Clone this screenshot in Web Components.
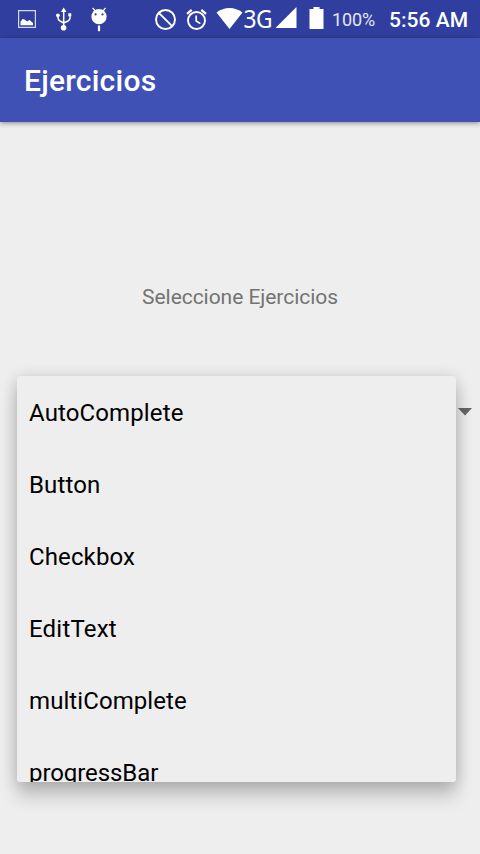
<!DOCTYPE html>
<html lang="es">
<head>
<meta charset="utf-8">
<title>Ejercicios</title>
<style>
html,body{margin:0;height:100%;background:#eee;overflow:hidden}
body{font-family:Roboto,"Liberation Sans",sans-serif}
</style>
</head>
<body>
<exercise-app></exercise-app>
<script>
const define = (name, html) => customElements.define(name, class extends HTMLElement {
  constructor() {
    super();
    this.attachShadow({ mode: 'open' }).innerHTML = html;
  }
});

define('status-bar', `
<style>
:host{display:flex;align-items:flex-start;height:38px;background:#303f9f;color:#fff;box-sizing:border-box;white-space:nowrap}
svg{display:block;flex:none;height:38px;fill:#fff}
span{flex:none;line-height:38px;height:38px}
.net{font:25px/37px "Noto Sans","Open Sans",sans-serif;width:30px;letter-spacing:-.5px;transform:translateX(-.6px) scaleX(.91);transform-origin:0 0}
.pct{font-size:18px;line-height:40px;width:57px;margin-left:-.6px;color:#e4e6f4;letter-spacing:-.1px}
.time{font-size:21px;font-weight:500;line-height:40px;letter-spacing:.04px}
</style>
<svg width="153" viewBox="0 0 153 38">
  <path d="M18.6 10.6h16.8v16.8H18.6z" fill="none" stroke="#d6d9ec" stroke-width="1.2"/>
  <path d="M20.5 25.2v-3.5l2-2.6 1.6.2 3 2.2 2.4-1.6 3.5 3v2.3z"/>
  <path d="M63.7 28V11M58 15.500V18q0 2 2 3l3.700 2M70 16v2q0 2-2 3l-4.300 2" fill="none" stroke="#fff" stroke-width="1.500"/>
  <path d="M63.700 7.500l2.800 4.500h-5.600zM68.300 13.300h3v3h-3z"/>
  <circle cx="57.900" cy="15.300" r="1.900"/><circle cx="63.600" cy="27.800" r="2.800"/>
  <path d="M92.700 8l3 3.500M105.500 8l-3 3.500" stroke="#fff" stroke-width="1.200"/>
  <circle cx="99" cy="16.700" r="7.600"/><path d="M97.900 25.500h2.200v5.700h-2.200z"/>
  <g fill="#303f9f"><circle cx="95.600" cy="14.400" r="1.100"/><circle cx="102.500" cy="14.400" r="1.100"/></g>
</svg>
<svg width="90.500" viewBox="153 0 90.500 38">
  <g fill="none" stroke="#fff" stroke-width="1.900">
    <circle cx="165.500" cy="19.500" r="9.500"/><path d="M158.800 12.800l13.400 13.400"/>
    <circle cx="196.500" cy="20.500" r="8.500"/><path d="M196.200 15.500v5.500l4.200 2.600" stroke-width="1.700"/>
    <path d="M187 13.800l4.700-4M206 13.800l-4.700-4" stroke-width="2.200"/>
  </g>
  <path d="M216.500 12.500C224 6.500 235 6.500 242.500 12.500L229.500 29z"/>
</svg>
<span class="net">3G</span>
<svg width="59" viewBox="273.500 0 59 38">
  <path d="M296 7v21h-21z"/><path d="M309 9h4V7h6v2h4v20h-14z"/>
</svg>
<span class="pct">100%</span><span class="time">5:56 AM</span>
`);

define('app-bar', `
<style>
:host{display:flex;align-items:center;height:84px;box-sizing:border-box;padding:2px 24px 0;background:#3f51b5;color:#fff;font-size:30px;font-weight:500;letter-spacing:.24px;box-shadow:0 1px 5px rgba(0,0,0,.45);line-height:1}
</style><slot></slot>`);

define('drop-spinner', `
<style>
:host{display:flex;position:relative;height:72px;margin:0 8px 0 17px;justify-content:flex-end;align-items:center}
svg{display:block}
::slotted(*){position:absolute;left:0;top:0}
</style><svg width="14" height="8" viewBox="0 0 14 8"><path d="M0 0h14L7 7.500z" fill="#666"/></svg><slot></slot>`);

define('option-menu', `
<style>
:host{display:block;width:439px;height:406px;background:#eee;border-radius:3px;
box-shadow:0 15px 18px rgba(0,0,0,.17),0 2px 16px rgba(0,0,0,.19)}
div{height:100%;overflow:hidden;border-radius:3px}
</style><div><slot></slot></div>`);

define('menu-option', `
<style>
:host{display:flex;align-items:center;height:72px;padding:2px 12px 0;box-sizing:border-box;font-size:24px;letter-spacing:.12px;color:#000;line-height:1}
</style><slot></slot>`);

define('exercise-app', `
<style>
:host{display:flex;flex-direction:column;width:480px;height:854px;background:#eee;overflow:hidden}
main{display:flex;flex-direction:column;padding-top:162px}
p{margin:0 0 66px;height:26px;line-height:26px;text-align:center;font-size:21px;letter-spacing:-.05px;color:#737373}
</style>
<status-bar></status-bar>
<app-bar>Ejercicios</app-bar>
<main>
  <p>Seleccione Ejercicios</p>
  <drop-spinner>
    <option-menu>
      <menu-option>AutoComplete</menu-option>
      <menu-option>Button</menu-option>
      <menu-option>Checkbox</menu-option>
      <menu-option style="letter-spacing:.2px">EditText</menu-option>
      <menu-option style="letter-spacing:.08px">multiComplete</menu-option>
      <menu-option style="letter-spacing:-.08px">progressBar</menu-option>
    </option-menu>
  </drop-spinner>
</main>`);
</script>
</body>
</html>
